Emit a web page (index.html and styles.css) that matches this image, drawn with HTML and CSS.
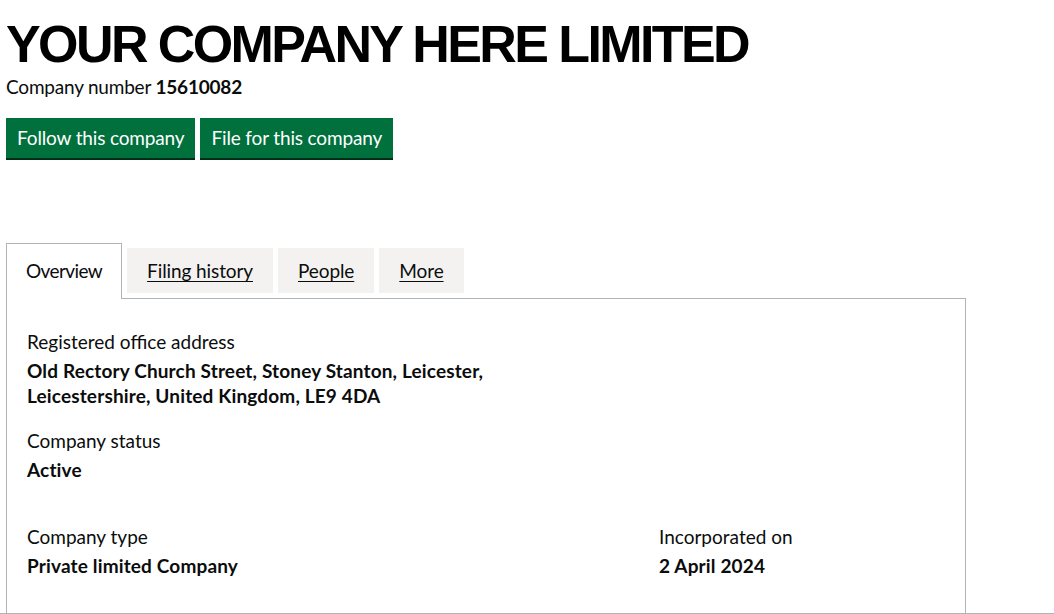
FILE: index.html
```html
<!DOCTYPE html>
<html lang="en">
<head>
<meta charset="utf-8">
<title>YOUR COMPANY HERE LIMITED</title>
<link rel="stylesheet" href="styles.css">
</head>
<body>
<main class="page">
  <h1 class="company-name">YOUR COMPANY HERE LIMITED</h1>
  <p class="company-number">Company number <strong>15610082</strong></p>
  <div class="actions">
    <a class="button" href="#">Follow this company</a>
    <a class="button" href="#">File for this company</a>
  </div>

  <div class="tabs">
    <ul class="tabs-list">
      <li class="tab tab-selected"><a href="#">Overview</a></li>
      <li class="tab"><a href="#">Filing history</a></li>
      <li class="tab"><a href="#">People</a></li>
      <li class="tab"><a href="#">More</a></li>
    </ul>
    <section class="tab-panel">
      <dl class="field field-address">
        <dt>Registered office address</dt>
        <dd>Old Rectory Church Street, Stoney Stanton, Leicester,<br>Leicestershire, United Kingdom, LE9 4DA</dd>
      </dl>
      <dl class="field field-status">
        <dt>Company status</dt>
        <dd>Active</dd>
      </dl>
      <div class="grid-row">
        <dl class="field col-two-thirds">
          <dt>Company type</dt>
          <dd>Private limited Company</dd>
        </dl>
        <dl class="field col-one-third">
          <dt>Incorporated on</dt>
          <dd>2 April 2024</dd>
        </dl>
      </div>
    </section>
  </div>
</main>
<div class="page-rule"></div>
</body>
</html>
```
FILE: styles.css
```css
* { box-sizing: border-box; }

html, body {
  margin: 0;
  padding: 0;
  background: #fff;
  color: #0b0c0c;
  font-family: Lato, "Liberation Sans", Arial, sans-serif;
  font-size: 19px;
  line-height: 25px;
}

.page {
  padding: 16px 6px 0;
}

.company-name {
  margin: 0;
  font-family: "Liberation Sans", Arial, sans-serif;
  font-weight: 700;
  font-size: 52px;
  line-height: 56px;
  letter-spacing: -2.6px;
  color: #000;
}

.company-number {
  margin: 2px 0 0;
  letter-spacing: -0.2px;
}

.company-number strong {
  font-weight: 700;
}

.actions {
  display: flex;
  gap: 5px;
  margin-top: 19px;
}

.button {
  display: inline-block;
  padding: 7px 11px 8px;
  background: #00703c;
  box-shadow: 0 2px 0 #002d18;
  color: #fff;
  text-decoration: none;
  line-height: 25px;
  letter-spacing: -0.15px;
}

.tabs {
  width: 960px;
  margin-top: 90px;
}

.tabs-list {
  display: flex;
  align-items: flex-start;
  margin: 0;
  padding: 0;
  list-style: none;
  border-bottom: 1px solid #b1b4b6;
}

.tab {
  margin: 0 5px 0 0;
  padding: 10px 20px;
  background: #f3f2f1;
  letter-spacing: -0.1px;
}

.tab a {
  color: #0b0c0c;
  text-decoration: underline;
  text-underline-offset: 3px;
  text-decoration-thickness: 1px;
}

.tab-selected {
  margin-top: -5px;
  margin-bottom: -1px;
  padding: 14px 19px 16px;
  border: 1px solid #b1b4b6;
  border-bottom: 0;
  background: #fff;
  letter-spacing: -0.6px;
}

.tab-selected a {
  text-decoration: none;
}

.tab-panel {
  padding: 30px 20px 35px;
  border: 1px solid #b1b4b6;
  border-top: 0;
  border-bottom: 0;
}

.field {
  margin: 0;
}

.field dt {
  margin: 0 0 4px;
}

.field dd {
  margin: 0;
  font-weight: 700;
  letter-spacing: 0.15px;
}

.field-address {
  margin-bottom: 20px;
}

.field-status {
  margin-bottom: 42px;
}

.grid-row {
  display: flex;
  margin: 0 -15px;
}

.col-two-thirds {
  width: 66.6667%;
  padding: 0 15px;
}

.col-one-third {
  width: 33.3333%;
  padding: 0 15px;
}

.page-rule {
  border-top: 1px solid #b1b4b6;
}
```
